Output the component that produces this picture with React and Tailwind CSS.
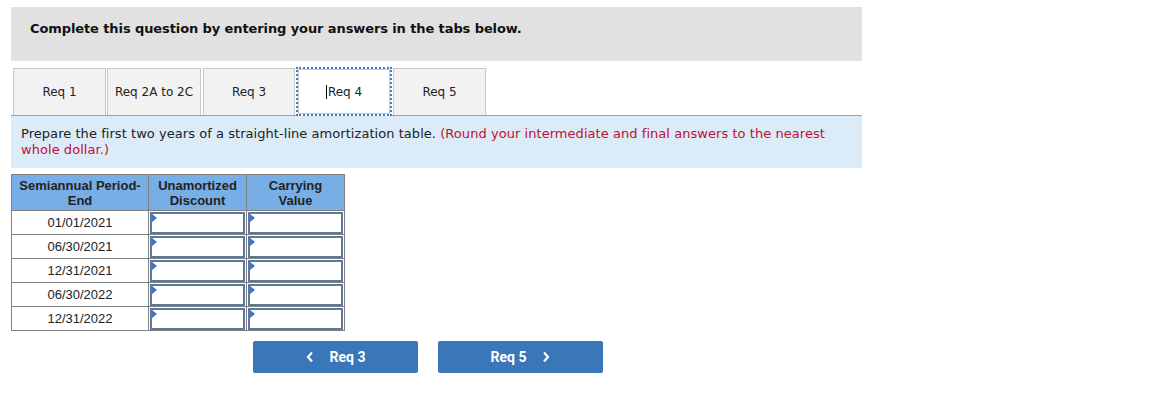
import React from "react";

const rows = ["01/01/2021", "06/30/2021", "12/31/2021", "06/30/2022", "12/31/2022"];

function InputCell() {
  return (
    <td className="border border-[#808080] p-0 h-[24px]">
      <div className="relative h-[22px] mx-px border-2 border-[#5f7899] bg-white">
        <span className="absolute left-0 top-0 w-0 h-0 border-t-[4px] border-b-[4px] border-l-[5px] border-t-transparent border-b-transparent border-l-[#3a76c4]" />
      </div>
    </td>
  );
}

export default function App() {
  const verdana = { fontFamily: '"DejaVu Sans", Verdana, sans-serif' };
  return (
    <div className="bg-white w-[1166px] h-[411px] pt-[7px] pl-[11px]" style={verdana}>
      <div className="w-[851px] h-[54px] bg-[#e1e1e1] flex items-center pl-[19px] pb-[11px]">
        <span className="text-[13px] font-bold text-[#111] tracking-[-0.1px]">
          Complete this question by entering your answers in the tabs below.
        </span>
      </div>

      <div className="w-[851px] mt-[7px] flex items-end border-b border-[#a0a0a0] h-[48px]">
        <div className="ml-[2px] w-[93px] h-[47px] bg-[#f2f2f2] border border-b-0 border-[#c8c8c8] flex items-center justify-center text-[12px] text-[#222]">Req 1</div>
        <div className="ml-[1px] w-[94px] h-[47px] bg-[#f2f2f2] border border-b-0 border-[#c8c8c8] flex items-center justify-center text-[12px] text-[#222]">Req 2A to 2C</div>
        <div className="ml-[2px] w-[92px] h-[47px] bg-[#f2f2f2] border border-b-0 border-[#c8c8c8] flex items-center justify-center text-[12px] text-[#222]">Req 3</div>
        <div className="ml-[1px] w-[96px] h-[49px] -mb-px bg-white border-2 border-dotted border-[#3f7cc4] flex items-center justify-center">
          <div className="w-full h-full border border-[#c8c8c8] flex items-center justify-center text-[12px] text-[#222]">
            <span className="inline-block w-px h-[14px] bg-black mr-px" />Req 4
          </div>
        </div>
        <div className="ml-[1px] w-[93px] h-[47px] bg-[#f2f2f2] border border-b-0 border-[#c8c8c8] flex items-center justify-center text-[12px] text-[#222]">Req 5</div>
      </div>

      <div className="w-[851px] h-[52px] bg-[#dbebf8] pl-[10px] pr-[30px] pt-[10px] text-[13px] leading-[16px] text-[#222] tracking-[0.05px]">
        Prepare the first two years of a straight-line amortization table.{" "}
        <span className="text-[#c0102f]">(Round your intermediate and final answers to the nearest whole dollar.)</span>
      </div>

      <table
        className="mt-[6px] border-collapse border border-[#808080] text-[13px] text-[#222]"
        style={{ fontFamily: '"Liberation Sans", Arial, sans-serif' }}
      >
        <thead>
          <tr className="bg-[#78aee6] h-[36px]">
            <th className="border border-[#808080] w-[137px] font-bold leading-[15px] p-0">Semiannual Period-<br />End</th>
            <th className="border border-[#808080] w-[98px] font-bold leading-[15px] p-0">Unamortized<br />Discount</th>
            <th className="border border-[#808080] w-[98px] font-bold leading-[15px] p-0">Carrying<br />Value</th>
          </tr>
        </thead>
        <tbody>
          {rows.map((d) => (
            <tr key={d} className="h-[24px]">
              <td className="border border-[#808080] text-center p-0 bg-white">{d}</td>
              <InputCell />
              <InputCell />
            </tr>
          ))}
        </tbody>
      </table>

      <div className="w-[834px] mt-[10px] flex justify-center gap-[20px]" style={{ fontFamily: 'Roboto, "Liberation Sans", sans-serif' }}>
        <div className="w-[165px] h-[32px] rounded-[2px] bg-[#3a76b8] flex items-center justify-center text-white font-bold text-[14px]">
          <svg width="8" height="12" viewBox="0 0 8 12" className="mr-[16px]">
            <path d="M6 1.5 L2 6 L6 10.5" stroke="white" strokeWidth="2.2" fill="none" />
          </svg>
          Req 3
        </div>
        <div className="w-[165px] h-[32px] rounded-[2px] bg-[#3a76b8] flex items-center justify-center text-white font-bold text-[14px]">
          Req 5
          <svg width="8" height="12" viewBox="0 0 8 12" className="ml-[16px]">
            <path d="M2 1.5 L6 6 L2 10.5" stroke="white" strokeWidth="2.2" fill="none" />
          </svg>
        </div>
      </div>
    </div>
  );
}
